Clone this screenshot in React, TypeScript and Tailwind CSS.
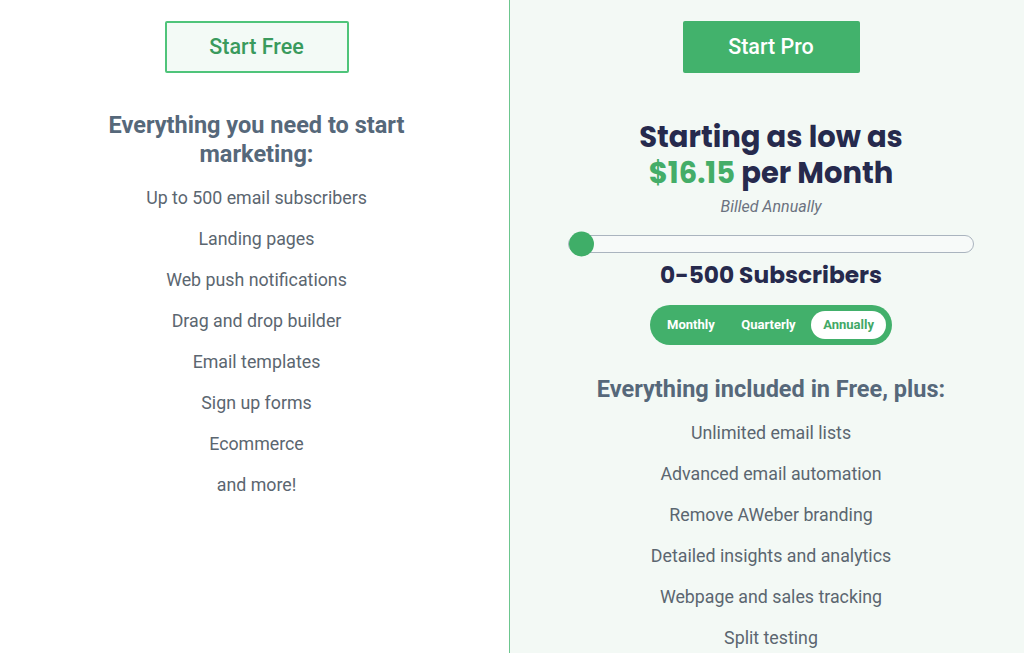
import { useState } from "react";

const freeFeatures = [
  "Up to 500 email subscribers",
  "Landing pages",
  "Web push notifications",
  "Drag and drop builder",
  "Email templates",
  "Sign up forms",
  "Ecommerce",
  "and more!",
];

const proFeatures = [
  "Unlimited email lists",
  "Advanced email automation",
  "Remove AWeber branding",
  "Detailed insights and analytics",
  "Webpage and sales tracking",
  "Split testing",
];

const periods = ["Monthly", "Quarterly", "Annually"];

export default function App() {
  const [period, setPeriod] = useState("Annually");

  return (
    <div className="flex h-[653px] w-[1024px] items-start overflow-hidden bg-white font-['Roboto',sans-serif]">
      {/* free plan */}
      <div className="flex w-[509px] flex-col items-center pt-[21px] pl-[4px]">
        <button className="h-[52px] w-[184px] rounded-[2px] border-2 border-[#4fc47a] bg-[#f3faf6] text-[21.5px] font-medium text-[#3a9a5d]">
          Start Free
        </button>
        <h3 className="mt-[38px] w-[340px] text-center text-[23.5px] font-bold leading-[29px] text-[#56687a]">
          Everything you need to start marketing:
        </h3>
        <ul className="mt-[8px] text-center text-[17.8px] leading-[41px] text-[#5b6670]">
          {freeFeatures.map((f) => (
            <li key={f}>{f}</li>
          ))}
        </ul>
      </div>

      {/* pro plan */}
      <div className="flex min-h-[653px] flex-1 flex-col items-center border-l border-[#6cc68e] bg-[#f3f9f5] pt-[21px] pb-[20px] pl-[8px]">
        <button className="h-[52px] w-[177px] rounded-[2px] bg-[#42b26c] text-[21.5px] font-medium text-white">
          Start Pro
        </button>
        <h2 className="mt-[46px] text-center font-['Poppins','Inter',sans-serif] text-[29px] font-bold leading-[36px] text-[#262a4d]">
          Starting as low as
          <br />
          <span className="text-[#44ad68]">$16.15</span> per Month
        </h2>
        <p className="mt-[6px] text-[16px] italic leading-[20px] text-[#6b7280]">Billed Annually</p>

        <div className="relative mt-[18px] h-[18px] w-[406px] rounded-full border-[1.5px] border-[#aab4bf] bg-[#f7faf9]">
          <span className="absolute top-1/2 left-0 h-[25px] w-[25px] -translate-y-1/2 rounded-full bg-[#3fae68]" />
        </div>

        <p className="mt-[7px] font-['Poppins','Inter',sans-serif] text-[23.3px] font-bold leading-[30px] text-[#262a4d]">
          0-500 Subscribers
        </p>

        <div className="mt-[15px] flex h-[40px] w-[242px] items-center justify-between rounded-full bg-[#42b06b] px-[6px]">
          {periods.map((p) => (
            <button
              key={p}
              onClick={() => setPeriod(p)}
              className={
                p === period
                  ? "h-[28px] rounded-full bg-white px-[12px] text-[13px] font-bold text-[#42a866]"
                  : "h-[28px] rounded-full px-[11px] text-[13px] font-bold text-white"
              }
            >
              {p}
            </button>
          ))}
        </div>

        <h3 className="mt-[30px] text-center text-[23.5px] font-bold leading-[29px] text-[#56687a]">
          Everything included in Free, plus:
        </h3>
        <ul className="mt-[8px] text-center text-[17.8px] leading-[41px] text-[#5b6670]">
          {proFeatures.map((f) => (
            <li key={f}>{f}</li>
          ))}
        </ul>
      </div>
    </div>
  );
}
